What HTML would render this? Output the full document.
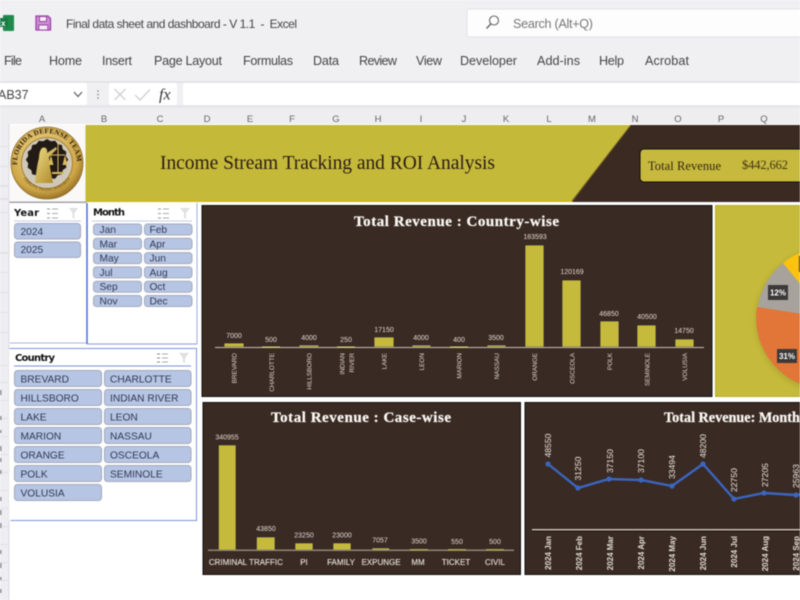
<!DOCTYPE html>
<html lang="en">
<head>
<meta charset="utf-8">
<title>Final data sheet and dashboard - Excel</title>
<style>
html,body{margin:0;padding:0;width:800px;height:600px;overflow:hidden;background:#fff}
svg{display:block;filter:blur(.4px)}
.ui{font-family:"Liberation Sans",sans-serif;fill:#444}
.rb{font-size:12.6px}
.col{font-family:"Liberation Sans",sans-serif;font-size:9.5px;fill:#666;text-anchor:middle}
.sl{font-family:"DejaVu Sans",sans-serif;font-size:10px;font-weight:bold;fill:#111}
.bt{font-family:"Liberation Sans",sans-serif;font-size:10.2px;fill:#2e3850}
.ttl{font-family:"Liberation Serif",serif;font-weight:bold;fill:#fbf9f3;stroke:#fbf9f3;stroke-width:.25;text-anchor:middle}
.v{font-family:"Liberation Sans",sans-serif;font-size:7px;fill:#e0dad1;text-anchor:middle}
.c{font-family:"Liberation Sans",sans-serif;font-size:6.4px;fill:#ddd7cd;text-anchor:end}
.k{font-family:"Liberation Sans",sans-serif;font-size:8px;fill:#e6e1d8;stroke:#e6e1d8;stroke-width:.12;text-anchor:middle}
.r{font-family:"Liberation Sans",sans-serif;font-size:8.6px;fill:#ece7de}
.m{font-family:"Liberation Sans",sans-serif;font-size:8px;font-weight:bold;fill:#e2ddd4;text-anchor:end}
.p{font-family:"Liberation Sans",sans-serif;font-size:8px;font-weight:bold;fill:#fff;text-anchor:middle}
</style>
</head>
<body>
<svg width="800" height="600" viewBox="0 0 800 600" xmlns="http://www.w3.org/2000/svg">
<defs>
<radialGradient id="gold" cx="45%" cy="40%" r="65%"><stop offset="0" stop-color="#f3e2a0"/><stop offset=".75" stop-color="#cda545"/><stop offset="1" stop-color="#86621f"/></radialGradient>
<linearGradient id="fig" x1="0" y1="0" x2="1" y2="1"><stop offset="0" stop-color="#efdc86"/><stop offset="1" stop-color="#a98422"/></linearGradient>
<path id="arcT" d="M17.400 168 A30 30 0 1 1 76.600 168"/>
<path id="arcB" d="M22 176 A28.500 28.500 0 0 0 72 176"/>
<clipPath id="c3"><rect x="525" y="403" width="275" height="171"/></clipPath>
<clipPath id="c4"><rect x="716" y="206" width="84" height="190"/></clipPath>
<filter id="bl" x="-20%" y="-20%" width="140%" height="140%"><feGaussianBlur stdDeviation="3"/></filter>
</defs>

<!-- window chrome -->
<rect width="800" height="125" fill="#f0eff2"/>
<rect x="0" y="81.500" width="800" height="1" fill="#dcdbde"/>
<rect x="0" y="105.500" width="800" height="2" fill="#e4e3e6"/>

<!-- excel icon -->
<rect x="3" y="15" width="11" height="16" rx="1" fill="#1f8a4c"/>
<rect x="0" y="18" width="8" height="9" fill="#1a7a45"/>
<text x="1" y="26" font-family="Liberation Sans,sans-serif" font-size="8" font-weight="bold" fill="#fff">x</text>
<!-- save icon -->
<path d="M36 16H48L50.500 18.500V30H36Z" fill="#cc8fce" stroke="#a040ac" stroke-width="1.300"/>
<rect x="39.500" y="16.500" width="7" height="5" fill="#f0eff2" stroke="#a040ac"/>
<rect x="38.800" y="25" width="9" height="5" fill="#f0eff2" stroke="#a040ac"/>

<text class="ui" x="66" y="28" font-size="12" textLength="231" lengthAdjust="spacing" xml:space="preserve">Final data sheet and dashboard - V 1.1  -  Excel</text>

<!-- search -->
<rect x="467" y="9" width="340" height="28" rx="2" fill="#fdfdfe" stroke="#e3e2e5"/>
<circle cx="494" cy="20.500" r="4.500" fill="none" stroke="#666" stroke-width="1.100"/>
<path d="M490.700 24 L486.500 28.500" stroke="#666" stroke-width="1.400"/>
<text class="ui" x="513" y="28" font-size="12.600" style="fill:#777" textLength="80" lengthAdjust="spacing">Search (Alt+Q)</text>

<!-- ribbon tabs -->
<text class="ui rb" x="4" y="65" textLength="18" lengthAdjust="spacing">File</text>
<text class="ui rb" x="49" y="65" textLength="33" lengthAdjust="spacing">Home</text>
<text class="ui rb" x="102" y="65" textLength="30" lengthAdjust="spacing">Insert</text>
<text class="ui rb" x="154" y="65" textLength="68" lengthAdjust="spacing">Page Layout</text>
<text class="ui rb" x="243" y="65" textLength="50" lengthAdjust="spacing">Formulas</text>
<text class="ui rb" x="313" y="65" textLength="26" lengthAdjust="spacing">Data</text>
<text class="ui rb" x="359" y="65" textLength="38" lengthAdjust="spacing">Review</text>
<text class="ui rb" x="416" y="65" textLength="26" lengthAdjust="spacing">View</text>
<text class="ui rb" x="460" y="65" textLength="57" lengthAdjust="spacing">Developer</text>
<text class="ui rb" x="537" y="65" textLength="43" lengthAdjust="spacing">Add-ins</text>
<text class="ui rb" x="599" y="65" textLength="25" lengthAdjust="spacing">Help</text>
<text class="ui rb" x="645" y="65" textLength="44" lengthAdjust="spacing">Acrobat</text>

<!-- formula bar -->
<rect x="-4" y="83" width="91" height="22" rx="2" fill="#fff"/>
<text class="ui" x="-2" y="99" font-size="12.500">AB37</text>
<path d="M74 92 L78 96.500 L82 92" fill="none" stroke="#555" stroke-width="1.100"/>
<circle cx="98" cy="91" r=".8" fill="#777"/><circle cx="98" cy="94.500" r=".8" fill="#777"/><circle cx="98" cy="98" r=".8" fill="#777"/>
<rect x="109" y="83" width="68" height="22" rx="2" fill="#fff"/>
<path d="M114.500 89 L125.500 100 M125.500 89 L114.500 100" stroke="#c9c9cc" stroke-width="1.200"/>
<path d="M135 95 L140 100 L150 89.500" fill="none" stroke="#c9c9cc" stroke-width="1.200"/>
<text x="159" y="99.500" font-family="Liberation Serif,serif" font-style="italic" font-size="16" fill="#333">fx</text>
<rect x="183" y="83" width="620" height="22" rx="2" fill="#fff"/>

<!-- column headers -->
<rect x="0" y="107.500" width="800" height="17" fill="#eeedf0"/>
<text class="col" x="42" y="122">A</text><text class="col" x="104" y="122">B</text><text class="col" x="160" y="122">C</text><text class="col" x="207" y="122">D</text><text class="col" x="250" y="122">E</text><text class="col" x="292" y="122">F</text><text class="col" x="336" y="122">G</text><text class="col" x="378" y="122">H</text><text class="col" x="421" y="122">I</text><text class="col" x="464" y="122">J</text><text class="col" x="506" y="122">K</text><text class="col" x="549" y="122">L</text><text class="col" x="592" y="122">M</text><text class="col" x="635" y="122">N</text><text class="col" x="678" y="122">O</text><text class="col" x="721" y="122">P</text><text class="col" x="764" y="122">Q</text>

<!-- row header strip -->
<rect x="0" y="124" width="9" height="476" fill="#eeedf1"/>
<rect x="8.500" y="124" width="1" height="476" fill="#dcdce1"/>
<g fill="#e1e1e5">
<rect y="146" width="8" height="1"/><rect y="166" width="8" height="1"/><rect y="185" width="8" height="2"/><rect y="198" width="8" height="2"/><rect y="212" width="8" height="1"/><rect y="252" width="8" height="2"/><rect y="272" width="8" height="1"/><rect y="292" width="8" height="1"/><rect y="312" width="8" height="1"/><rect y="332" width="8" height="1"/><rect y="365" width="8" height="1"/><rect y="382" width="8" height="1"/><rect y="400" width="8" height="1"/><rect y="418" width="8" height="1"/><rect y="436" width="8" height="1"/><rect y="454" width="8" height="1"/><rect y="472" width="8" height="1"/><rect y="490" width="8" height="1"/><rect y="508" width="8" height="1"/><rect y="526" width="8" height="1"/><rect y="544" width="8" height="1"/><rect y="562" width="8" height="1"/><rect y="580" width="8" height="1"/>
</g>
<g fill="#8b8b8f">
<rect x="0" y="390" width="1.500" height="5"/><rect x="0" y="416" width="1.500" height="4"/><rect x="0" y="430" width="1.500" height="3"/><rect x="0" y="446" width="1.500" height="5"/><rect x="0" y="458" width="1.500" height="4"/><rect x="0" y="470" width="1.500" height="4"/><rect x="0" y="497" width="1.500" height="4"/><rect x="0" y="510" width="1.500" height="5"/><rect x="0" y="523" width="1.500" height="5"/><rect x="0" y="550" width="1.500" height="4"/><rect x="0" y="563" width="1.500" height="5"/><rect x="0" y="577" width="1.500" height="3"/><rect x="0" y="589" width="1.500" height="4"/>
</g>

<!-- sheet -->
<rect x="10" y="124" width="790" height="476" fill="#fff"/>

<!-- header band -->
<rect x="10" y="125" width="76" height="77" fill="#faf9f8"/>
<rect x="85.500" y="125" width="715" height="76.500" fill="#c5b93a"/>
<rect x="85.500" y="200.500" width="490" height="1.500" fill="#c9bb10"/>
<polygon points="631,125 800,125 800,202 572,202" fill="#3a2a22"/>
<path d="M631 125 L572 201" stroke="#6b5a1e" stroke-width="1"/>
<rect x="640" y="149" width="165" height="33" rx="4" fill="#c6b93e" stroke="#100e0a" stroke-width="1"/>
<text x="160" y="169" font-family="Liberation Serif,serif" font-size="19.500" fill="#2a1c14" textLength="335" lengthAdjust="spacing">Income Stream Tracking and ROI Analysis</text>
<text x="648" y="170" font-family="Liberation Serif,serif" font-size="12.500" fill="#35260f" textLength="73" lengthAdjust="spacing">Total Revenue</text>
<text x="742" y="169" font-family="Liberation Serif,serif" font-size="12.500" fill="#44340f" textLength="46" lengthAdjust="spacing">$442,662</text>

<!-- logo -->
<circle cx="47" cy="163" r="36" fill="url(#gold)" stroke="#8a6a28" stroke-width=".8"/>
<circle cx="47" cy="163" r="25.500" fill="#cfc8b8" stroke="#a87f2c" stroke-width="1"/>
<path d="M47 139 l3.800 2.200 4.400 -.5 2.400 3.400 4.300 1 .8 4.200 3.600 2.400 -.5 4.400 2.400 3.600 -2.400 3.600 .5 4.400 -3.600 2.400 -.8 4.200 -4.300 1 -2.400 3.400 -4.400 -.5 -3.800 2.200 -3.800 -2.200 -4.400 .5 -2.400 -3.400 -4.300 -1 -.8 -4.200 -3.600 -2.400 .5 -4.400 -2.400 -3.600 2.400 -3.600 -.5 -4.400 3.600 -2.400 .8 -4.200 4.300 -1 2.400 -3.400 4.400 .5Z" fill="#221a14"/>
<path d="M42 148 C46 146 48 150 47 153 L56 147 L57 149 L49 157 L50 167 L53 183 L35 183 C36 174 37 165 39 158 C39 154 40 150 42 148Z" fill="url(#fig)"/>
<path d="M58 143 V172 M51 155 H65" stroke="#d6ba5c" stroke-width="1" fill="none"/>
<path d="M51 155 L53.500 165 H48.500Z M65 155 L67.500 165 H62.500Z" fill="#d6ba5c"/>
<rect x="52" y="172" width="12" height="2" fill="#d6ba5c"/>
<text font-family="Liberation Serif,serif" font-size="7" font-weight="bold" fill="#2a1c0c" letter-spacing=".3"><textPath href="#arcT" startOffset="3">FLORIDA DEFENSE TEAM</textPath></text>
<text font-family="Liberation Serif,serif" font-size="3.800" fill="#4e3a18"><textPath href="#arcB" startOffset="3">FIDELITY, TALENT, INTEGRITY</textPath></text>

<!-- year slicer -->
<rect x="10" y="202" width="76" height="140.500" fill="#fff"/>
<rect x="10" y="342.500" width="76" height="1" fill="#a9b3de"/>
<rect x="9.500" y="201.500" width="77" height="1.500" fill="#a4a4aa"/>
<text class="sl" x="14" y="216" textLength="25" lengthAdjust="spacing">Year</text>
<path d="M52 209H58M52 213.500H58M52 218H58" stroke="#aaa" stroke-width="1"/><path d="M47 209h3M47 213.500h3M47 218h3" stroke="#999" stroke-width="1"/>
<path d="M69 208H78L74.500 213V219L72.500 217.500V213Z" fill="#e0e0e3"/>
<rect x="14" y="220.500" width="67" height="1" fill="#c3cbe3"/>
<rect x="14.500" y="223.500" width="66" height="15.500" rx="3" fill="#b7c5e5" stroke="#a4a9b8"/>
<rect x="14.500" y="242" width="66" height="15.500" rx="3" fill="#b7c5e5" stroke="#a4a9b8"/>
<text class="bt" x="20.500" y="235">2024</text>
<text class="bt" x="20.500" y="253">2025</text>

<!-- month slicer -->
<rect x="87" y="203" width="110" height="141" fill="#fff"/>
<rect x="196.500" y="203" width="1" height="141" fill="#a3abdf"/>
<rect x="87" y="343.500" width="110" height="1" fill="#8a98de"/>
<rect x="86.300" y="203" width="1.400" height="141" fill="#3a68d2"/>
<text class="sl" x="93" y="215.500" textLength="32" lengthAdjust="spacing">Month</text>
<path d="M163 209H169M163 213.500H169M163 218H169" stroke="#aaa" stroke-width="1"/><path d="M158 209h3M158 213.500h3M158 218h3" stroke="#999" stroke-width="1"/>
<path d="M180 208H190L186 213V219L184 217.500V213Z" fill="#e0e0e3"/>
<rect x="92" y="220.500" width="100" height="1" fill="#c3cbe3"/>
<g fill="#b7c5e5" stroke="#a4a9b8">
<rect x="93.500" y="224" width="48" height="11" rx="3"/><rect x="144.500" y="224" width="47.500" height="11" rx="3"/>
<rect x="93.500" y="238.300" width="48" height="11" rx="3"/><rect x="144.500" y="238.300" width="47.500" height="11" rx="3"/>
<rect x="93.500" y="252.600" width="48" height="11" rx="3"/><rect x="144.500" y="252.600" width="47.500" height="11" rx="3"/>
<rect x="93.500" y="266.900" width="48" height="11" rx="3"/><rect x="144.500" y="266.900" width="47.500" height="11" rx="3"/>
<rect x="93.500" y="281.200" width="48" height="11" rx="3"/><rect x="144.500" y="281.200" width="47.500" height="11" rx="3"/>
<rect x="93.500" y="295.500" width="48" height="11" rx="3"/><rect x="144.500" y="295.500" width="47.500" height="11" rx="3"/>
</g>
<text class="bt" x="99.500" y="233">Jan</text><text class="bt" x="149.500" y="233">Feb</text>
<text class="bt" x="99.500" y="247.300">Mar</text><text class="bt" x="149.500" y="247.300">Apr</text>
<text class="bt" x="99.500" y="261.600">May</text><text class="bt" x="149.500" y="261.600">Jun</text>
<text class="bt" x="99.500" y="275.900">Jul</text><text class="bt" x="149.500" y="275.900">Aug</text>
<text class="bt" x="99.500" y="290.200">Sep</text><text class="bt" x="149.500" y="290.200">Oct</text>
<text class="bt" x="99.500" y="304.500">Nov</text><text class="bt" x="149.500" y="304.500">Dec</text>

<!-- country slicer -->
<rect x="10" y="348.500" width="186.500" height="172" fill="#fff" stroke="#8092dc" stroke-width="1"/>
<rect x="9" y="349" width="1.500" height="172" fill="#fff"/>
<text class="sl" x="15" y="361" textLength="40" lengthAdjust="spacing">Country</text>
<path d="M162 354H168M162 358H168M162 362H168" stroke="#aaa" stroke-width="1"/><path d="M157 354h3M157 358h3M157 362h3" stroke="#888" stroke-width="1"/>
<path d="M179 353H189L185 358V363L183 362V358Z" fill="#e0e0e3"/>
<rect x="14" y="365.500" width="177" height="1" fill="#7a90da"/>
<g fill="#b7c5e5" stroke="#a4a9b8">
<rect x="14.500" y="370.500" width="87" height="16" rx="3"/><rect x="104.500" y="370.500" width="86.500" height="16" rx="3"/>
<rect x="14.500" y="389.500" width="87" height="16" rx="3"/><rect x="104.500" y="389.500" width="86.500" height="16" rx="3"/>
<rect x="14.500" y="408.500" width="87" height="16" rx="3"/><rect x="104.500" y="408.500" width="86.500" height="16" rx="3"/>
<rect x="14.500" y="427.500" width="87" height="16" rx="3"/><rect x="104.500" y="427.500" width="86.500" height="16" rx="3"/>
<rect x="14.500" y="446.500" width="87" height="16" rx="3"/><rect x="104.500" y="446.500" width="86.500" height="16" rx="3"/>
<rect x="14.500" y="465.500" width="87" height="16" rx="3"/><rect x="104.500" y="465.500" width="86.500" height="16" rx="3"/>
<rect x="14.500" y="484.500" width="87" height="16" rx="3"/>
</g>
<text class="bt" x="20.500" y="382.500">BREVARD</text><text class="bt" x="110" y="382.500">CHARLOTTE</text>
<text class="bt" x="20.500" y="401.500">HILLSBORO</text><text class="bt" x="110" y="401.500">INDIAN RIVER</text>
<text class="bt" x="20.500" y="420.500">LAKE</text><text class="bt" x="110" y="420.500">LEON</text>
<text class="bt" x="20.500" y="439.500">MARION</text><text class="bt" x="110" y="439.500">NASSAU</text>
<text class="bt" x="20.500" y="458.500">ORANGE</text><text class="bt" x="110" y="458.500">OSCEOLA</text>
<text class="bt" x="20.500" y="477.500">POLK</text><text class="bt" x="110" y="477.500">SEMINOLE</text>
<text class="bt" x="20.500" y="496.500">VOLUSIA</text>

<!-- chart 1 -->
<rect x="202" y="205.500" width="510" height="191" fill="#3a2a24" stroke="#111" stroke-width="1"/>
<text class="ttl" x="456.500" y="226" font-size="15" textLength="205" lengthAdjust="spacing">Total Revenue : Country-wise</text>
<g fill="#c5ba3b" stroke="#1c1836" stroke-width=".6">
<rect x="224" y="343" width="20" height="4"/><rect x="299" y="345" width="20" height="2"/><rect x="374" y="337" width="20" height="10"/><rect x="412" y="345" width="19" height="2"/><rect x="487" y="345" width="19" height="2"/>
<rect x="525" y="245" width="19" height="102"/><rect x="562" y="280" width="19" height="67"/><rect x="600" y="321" width="19" height="26"/><rect x="637" y="325" width="19" height="22"/><rect x="675" y="339" width="19" height="8"/>
</g>
<rect x="215" y="347" width="489" height="1" fill="#c9bfb0"/>
<rect x="262" y="346.500" width="18" height="1.200" fill="#d7d07a"/><rect x="337" y="346.500" width="18" height="1.200" fill="#d7d07a"/><rect x="450" y="346.500" width="18" height="1.200" fill="#d7d07a"/>
<text class="v" x="234" y="338">7000</text><text class="v" x="271" y="342">500</text><text class="v" x="309" y="340">4000</text><text class="v" x="346" y="342">250</text><text class="v" x="384" y="332">17150</text><text class="v" x="421" y="340">4000</text><text class="v" x="459" y="342">400</text><text class="v" x="496" y="340">3500</text><text class="v" x="535" y="239">183593</text><text class="v" x="572" y="274">120169</text><text class="v" x="609" y="316">46850</text><text class="v" x="647" y="319">40500</text><text class="v" x="684" y="333">14750</text>
<text class="c" transform="translate(236.500,353) rotate(-90)">BREVARD</text>
<text class="c" transform="translate(274,353) rotate(-90)">CHARLOTTE</text>
<text class="c" transform="translate(311.500,353) rotate(-90)">HILLSBORO</text>
<text class="c" transform="translate(344.500,353) rotate(-90)">INDIAN</text>
<text class="c" transform="translate(354,353) rotate(-90)">RIVER</text>
<text class="c" transform="translate(386.500,353) rotate(-90)">LAKE</text>
<text class="c" transform="translate(424,353) rotate(-90)">LEON</text>
<text class="c" transform="translate(461.500,353) rotate(-90)">MARION</text>
<text class="c" transform="translate(499,353) rotate(-90)">NASSAU</text>
<text class="c" transform="translate(537,353) rotate(-90)">ORANGE</text>
<text class="c" transform="translate(574.500,353) rotate(-90)">OSCEOLA</text>
<text class="c" transform="translate(612,353) rotate(-90)">POLK</text>
<text class="c" transform="translate(649.500,353) rotate(-90)">SEMINOLE</text>
<text class="c" transform="translate(687,353) rotate(-90)">VOLUSIA</text>

<!-- pie -->
<rect x="715.500" y="205.500" width="90" height="191" fill="#c5ba3b" stroke="#b8ae2a" stroke-width="1"/>
<g clip-path="url(#c4)">
<circle cx="828" cy="320" r="72" fill="#8f8728" opacity=".45" filter="url(#bl)"/>
<circle cx="828" cy="318" r="71" fill="#a8a29c"/>
<path d="M828 318 L783 263 A71 71 0 0 1 828 247Z" fill="#fdc20d"/>
<path d="M828 318 L828 389 A71 71 0 0 1 757 307Z" fill="#e27538"/>
<rect x="768" y="285" width="20" height="15" fill="#3b3a38"/>
<text class="p" x="778" y="295.500">12%</text>
<rect x="777" y="349" width="20" height="14" fill="#3b3a38"/>
<text class="p" x="787" y="359">31%</text>
<rect x="799" y="256" width="6" height="16" fill="#222"/>
</g>

<!-- chart 2 -->
<rect x="203" y="402.500" width="317.500" height="172" fill="#3a2a24" stroke="#111" stroke-width="1"/>
<text class="ttl" x="361" y="422" font-size="15" textLength="180" lengthAdjust="spacing">Total Revenue : Case-wise</text>
<g fill="#c5ba3b" stroke="#1c1836" stroke-width=".5">
<rect x="218.500" y="445" width="17.500" height="105"/><rect x="256.500" y="537" width="18.500" height="13"/><rect x="295" y="543" width="18" height="7"/><rect x="333" y="543" width="18" height="7"/><rect x="372" y="548" width="17.500" height="2"/>
</g>
<rect x="208" y="549.500" width="306" height="1.500" fill="#8f8672"/>
<rect x="410" y="549" width="18" height="1.500" fill="#aaa050"/><rect x="448" y="549" width="18" height="1.500" fill="#aaa050"/><rect x="486" y="549" width="18" height="1.500" fill="#aaa050"/>
<text class="v" x="227" y="439.500">340955</text><text class="v" x="266" y="531">43850</text><text class="v" x="304" y="537.500">23250</text><text class="v" x="342" y="537.500">23000</text><text class="v" x="380" y="542.500">7057</text><text class="v" x="419" y="543.500">3500</text><text class="v" x="457" y="544">550</text><text class="v" x="495" y="544">500</text>
<text class="k" x="228" y="565">CRIMINAL</text><text class="k" x="266" y="565">TRAFFIC</text><text class="k" x="304" y="565">PI</text><text class="k" x="341" y="565">FAMILY</text><text class="k" x="381" y="565">EXPUNGE</text><text class="k" x="418" y="565">MM</text><text class="k" x="456" y="565">TICKET</text><text class="k" x="495" y="565">CIVIL</text>

<!-- chart 3 -->
<rect x="525" y="402.500" width="285" height="172" fill="#3a2a24" stroke="#111" stroke-width="1"/>
<g clip-path="url(#c3)">
<text x="664" y="422" font-family="Liberation Serif,serif" font-weight="bold" font-size="14.200" fill="#fbf9f3" stroke="#fbf9f3" stroke-width=".25">Total Revenue: Month-wise</text>
<polyline points="548,464 578,488 609,479 641,480 672,486 703,464 734,499 764,493 796,495 828,490" fill="none" stroke="#3a66c0" stroke-width="2.400"/>
<g fill="#3a66c0"><circle cx="548" cy="464" r="2.600"/><circle cx="578" cy="488" r="2.600"/><circle cx="609" cy="479" r="2.600"/><circle cx="641" cy="480" r="2.600"/><circle cx="672" cy="486" r="2.600"/><circle cx="703" cy="464" r="2.600"/><circle cx="734" cy="499" r="2.600"/><circle cx="764" cy="493" r="2.600"/><circle cx="796" cy="495" r="2.600"/></g>
<rect x="532" y="529" width="270" height="1.500" fill="#c9c0b2"/>
<rect x="532" y="530.500" width="270" height="1" fill="#111"/>
<text class="r" transform="translate(551,457.500) rotate(-90)">48550</text>
<text class="r" transform="translate(581,480.500) rotate(-90)">31250</text>
<text class="r" transform="translate(613,473) rotate(-90)">37150</text>
<text class="r" transform="translate(644,473) rotate(-90)">37100</text>
<text class="r" transform="translate(675,479) rotate(-90)">33494</text>
<text class="r" transform="translate(706,458) rotate(-90)">48200</text>
<text class="r" transform="translate(737,492) rotate(-90)">22750</text>
<text class="r" transform="translate(768,487) rotate(-90)">27205</text>
<text class="r" transform="translate(799,488) rotate(-90)">25963</text>
<text class="m" transform="translate(551,536) rotate(-90)">2024 Jan</text>
<text class="m" transform="translate(582,536) rotate(-90)">2024 Feb</text>
<text class="m" transform="translate(613,536) rotate(-90)">2024 Mar</text>
<text class="m" transform="translate(644,536) rotate(-90)">2024 Apr</text>
<text class="m" transform="translate(675,536) rotate(-90)">2024 May</text>
<text class="m" transform="translate(706,536) rotate(-90)">2024 Jun</text>
<text class="m" transform="translate(737,536) rotate(-90)">2024 Jul</text>
<text class="m" transform="translate(768,536) rotate(-90)">2024 Aug</text>
<text class="m" transform="translate(799,536) rotate(-90)">2024 Sep</text>
</g>
</svg>
</body>
</html>
